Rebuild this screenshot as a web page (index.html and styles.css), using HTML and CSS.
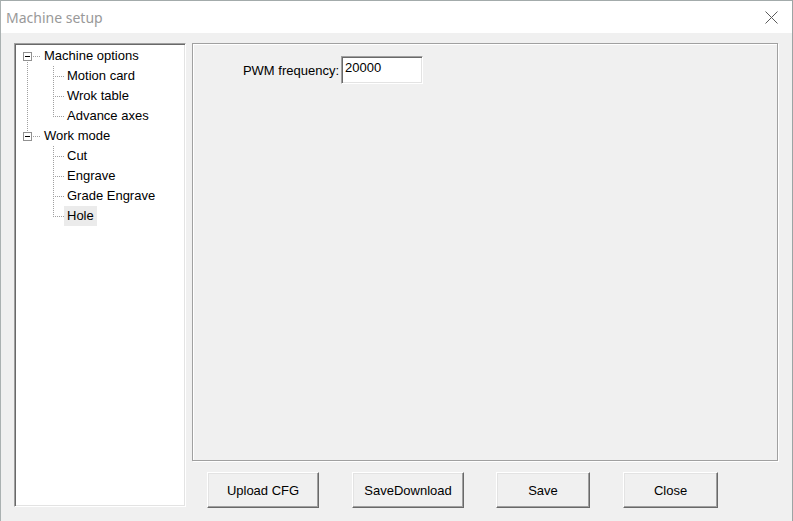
FILE: index.html
```html
<!DOCTYPE html>
<html>
<head>
<meta charset="utf-8">
<link rel="stylesheet" href="styles.css">
</head>
<body>
<div class="window">
  <div class="titlebar">
    <span class="title">Machine setup</span>
    <svg class="close" width="13" height="13" viewBox="0 0 13 13"><path d="M0.5 0.5 L12.5 12.5 M12.5 0.5 L0.5 12.5" stroke="#5a5a5a" stroke-width="1" fill="none"/></svg>
  </div>
  <div class="client">
    <div class="tree">
      <div class="row">
        <svg class="tw-root" width="25" height="20" viewBox="0 0 25 20">
          <path class="dot" d="M11.5 16 V20 M17 10.5 H25"/>
          <rect class="box" x="7.5" y="6.5" width="8" height="8"/>
          <path class="minus" d="M9 10.5 H14"/>
        </svg>
        <span class="lbl">Machine options</span>
      </div>
      <div class="row">
        <svg class="tw-child" width="48" height="20" viewBox="0 0 48 20"><path class="dot" d="M11.5 0 V20 M37.5 0 V20 M39 10.5 H48"/></svg>
        <span class="lbl">Motion card</span>
      </div>
      <div class="row">
        <svg class="tw-child" width="48" height="20" viewBox="0 0 48 20"><path class="dot" d="M11.5 0 V20 M37.5 0 V20 M39 10.5 H48"/></svg>
        <span class="lbl">Wrok table</span>
      </div>
      <div class="row">
        <svg class="tw-child" width="48" height="20" viewBox="0 0 48 20"><path class="dot" d="M11.5 0 V20 M37.5 0 V11 M39 10.5 H48"/></svg>
        <span class="lbl">Advance axes</span>
      </div>
      <div class="row">
        <svg class="tw-root" width="25" height="20" viewBox="0 0 25 20">
          <path class="dot" d="M11.5 0 V6 M17 10.5 H25"/>
          <rect class="box" x="7.5" y="6.5" width="8" height="8"/>
          <path class="minus" d="M9 10.5 H14"/>
        </svg>
        <span class="lbl">Work mode</span>
      </div>
      <div class="row">
        <svg class="tw-child" width="48" height="20" viewBox="0 0 48 20"><path class="dot" d="M37.5 0 V20 M39 10.5 H48"/></svg>
        <span class="lbl">Cut</span>
      </div>
      <div class="row">
        <svg class="tw-child" width="48" height="20" viewBox="0 0 48 20"><path class="dot" d="M37.5 0 V20 M39 10.5 H48"/></svg>
        <span class="lbl">Engrave</span>
      </div>
      <div class="row">
        <svg class="tw-child" width="48" height="20" viewBox="0 0 48 20"><path class="dot" d="M37.5 0 V20 M39 10.5 H48"/></svg>
        <span class="lbl">Grade Engrave</span>
      </div>
      <div class="row">
        <svg class="tw-child" width="48" height="20" viewBox="0 0 48 20"><path class="dot" d="M37.5 0 V11 M39 10.5 H48"/></svg>
        <span class="lbl selected">Hole</span>
      </div>
    </div>
    <div class="main">
      <div class="panel">
        <div class="field">
          <label class="label">PWM frequency:</label>
          <div class="input">20000</div>
        </div>
      </div>
      <div class="buttons">
        <button class="btn btn-wide">Upload CFG</button>
        <button class="btn btn-wide btn-second">SaveDownload</button>
        <button class="btn btn-narrow btn-third">Save</button>
        <button class="btn btn-narrow btn-fourth">Close</button>
      </div>
    </div>
  </div>
</div>
</body>
</html>
```
FILE: styles.css
```css
html, body {
  margin: 0;
  padding: 0;
  background: #ffffff;
}
body {
  font-family: "Liberation Sans", Arial, sans-serif;
  font-size: 13px;
  color: #000;
}
.window {
  width: 793px;
  height: 521px;
  box-sizing: border-box;
  border-top: 1px solid #a3abab;
  border-left: 1px solid #aab1b1;
  border-right: 1px solid #9ca4a4;
  background: #f0f0f0;
  display: flex;
  flex-direction: column;
  overflow: hidden;
}
.titlebar {
  height: 32px;
  flex: none;
  background: #ffffff;
  display: flex;
  align-items: center;
  padding-left: 5px;
}
.title {
  font-family: "Noto Sans", "Open Sans", sans-serif;
  font-size: 14px;
  color: #999999;
}
.close {
  display: block;
  margin-left: auto;
  margin-right: 14px;
  shape-rendering: auto;
}
.client {
  flex: 1;
  display: flex;
  align-items: flex-start;
  padding: 10px 0 0 13px;
  gap: 6px;
}
.tree {
  width: 172px;
  height: 464px;
  box-sizing: border-box;
  background: #ffffff;
  border: 1px solid;
  border-color: #a0a0a0 #ffffff #ffffff #a0a0a0;
  box-shadow: inset 1px 1px 0 #696969, inset -1px -1px 0 #e3e3e3;
  padding: 2px 0 0 1px;
}
.row {
  height: 20px;
  display: flex;
  align-items: center;
}
.row svg {
  display: block;
  flex: none;
  shape-rendering: crispEdges;
}
.dot {
  stroke: #a0a0a0;
  stroke-width: 1;
  stroke-dasharray: 1 1;
  fill: none;
}
.box {
  fill: #ffffff;
  stroke: #919191;
  stroke-width: 1;
}
.minus {
  stroke: #000000;
  stroke-width: 1;
}
.lbl {
  padding: 0 3px;
  line-height: 20px;
  white-space: nowrap;
}
.selected {
  background: #ebebeb;
}
.main {
  display: flex;
  flex-direction: column;
}
.panel {
  width: 586px;
  height: 418px;
  box-sizing: border-box;
  border: 1px solid #a0a0a0;
  box-shadow: 1px 1px 0 #ffffff, inset 1px 1px 0 #ffffff;
  padding-top: 12px;
}
.field {
  display: flex;
  align-items: center;
}
.label {
  width: 146px;
  text-align: right;
  margin-right: 2px;
  white-space: nowrap;
}
.input {
  width: 82px;
  height: 28px;
  box-sizing: border-box;
  background: #ffffff;
  border: 1px solid;
  border-color: #a0a0a0 #ffffff #ffffff #a0a0a0;
  box-shadow: inset 1px 1px 0 #696969, inset -1px -1px 0 #e3e3e3;
  padding: 3px 0 0 3px;
  line-height: 15px;
}
.buttons {
  display: flex;
  margin-top: 11px;
  padding-left: 15px;
}
.btn {
  height: 36px;
  box-sizing: border-box;
  background: #f0f0f0;
  border: 1px solid;
  border-color: #ffffff #696969 #696969 #ffffff;
  box-shadow: inset -1px -1px 0 #a0a0a0, inset 1px 1px 0 #e3e3e3;
  font-family: "Liberation Sans", Arial, sans-serif;
  font-size: 13px;
  color: #000;
  padding: 0;
  margin: 0;
}
.btn-wide {
  width: 112px;
}
.btn-narrow {
  width: 94px;
}
.btn-second {
  margin-left: 33px;
}
.btn-third {
  margin-left: 32px;
}
.btn-fourth {
  margin-left: 33px;
  width: 95px;
}
```
